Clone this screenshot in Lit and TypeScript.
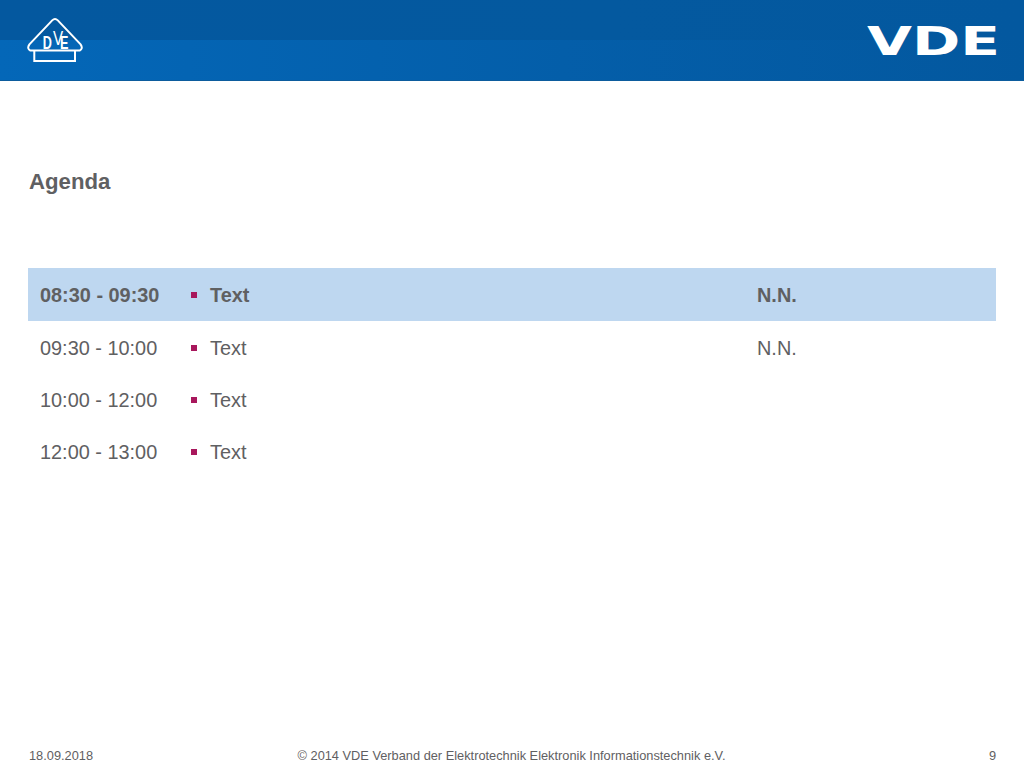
import { LitElement, html, css, svg } from "lit";
import { customElement } from "lit/decorators.js";

const rows = [
  { time: "08:30 - 09:30", text: "Text", who: "N.N.", active: true },
  { time: "09:30 - 10:00", text: "Text", who: "N.N.", active: false },
  { time: "10:00 - 12:00", text: "Text", who: "", active: false },
  { time: "12:00 - 13:00", text: "Text", who: "", active: false },
];

@customElement("app-root")
export class AppRoot extends LitElement {
  static styles = css`
    :host {
      display: flex;
      flex-direction: column;
      width: 1024px;
      height: 768px;
      background: #fff;
      color: #5f6062;
      font-family: "Liberation Sans", Arial, sans-serif;
      overflow: hidden;
    }
    .header {
      position: relative;
      height: 81px;
      flex: none;
      display: flex;
      align-items: flex-start;
      justify-content: space-between;
      padding: 0 24px 0 27px;
      box-sizing: border-box;
      background: linear-gradient(90deg, #0467b8 0%, #045ea9 55%, #03589f 100%);
      border-bottom: 1px solid #0c5c9d;
      overflow: hidden;
    }
    .band {
      position: absolute;
      left: 0;
      right: 0;
      top: 0;
      height: 40px;
      background: linear-gradient(90deg, #04589f 0%, #04599f 60%, #03589f 100%);
    }
    .mark, .vde { position: relative; display: block; }
    .mark { margin-top: 17px; }
    .vde { margin-top: 17px; }
    .title {
      margin: 89px 0 0 29px;
      height: 24px;
      font-size: 22.2px;
      line-height: 24px;
      font-weight: 700;
    }
    .table {
      margin: 74px 28px 0 28px;
      display: flex;
      flex-direction: column;
    }
    .row {
      display: grid;
      grid-template-columns: 160px 22px 547px 1fr;
      align-items: center;
      box-sizing: border-box;
      height: 52px;
      padding-top: 4px;
      font-size: 19.9px;
    }
    .row.active {
      height: 52.5px;
      padding-top: 3px;
      background: #bed7f0;
      font-weight: 700;
    }
    .time { padding-left: 12px; }
    .bullet { width: 6px; height: 6px; background: #a8175c; margin: -2px 0 0 3px; }
    .spacer { flex: 1; }
    .footer {
      display: grid;
      grid-template-columns: 1fr 700px 1fr;
      padding: 0 28px 4px 29px;
      font-size: 12.8px;
      line-height: 16px;
    }
    .center { text-align: center; transform: translateX(-1px); }
    .right { text-align: right; }
  `;

  render() {
    return html`
      <div class="header">
        <div class="band"></div>
        <svg class="mark" width="58" height="47" viewBox="0 0 58 47">
          <path d="M25.2 3.4 Q28 0.6 30.8 3.4 L53.6 27.4 Q56.4 31.6 52.6 33.6 L3.4 33.6 Q-0.4 31.6 2.4 27.4 Z" fill="none" stroke="#fff" stroke-width="2" stroke-linejoin="round" />
          <path d="M7.3 34 V44 H48 V34" fill="none" stroke="#fff" stroke-width="2" />
          ${svg`<g transform="scale(0.72 1)"><text font-family="Liberation Sans" font-weight="700" font-size="17.5" fill="#fff"><tspan x="22" y="32">D</tspan><tspan x="36" y="28" font-size="21" font-weight="400">V</tspan><tspan x="46" y="32">E</tspan></text></g>`}
        </svg>
        <svg class="vde" width="134" height="48" viewBox="0 0 134 48">
          ${svg`<text x="1" y="38" font-family="DejaVu Sans" font-size="38.5" font-weight="700" fill="#fff" textLength="133" lengthAdjust="spacingAndGlyphs">VDE</text>`}
        </svg>
      </div>
      <div class="title">Agenda</div>
      <div class="table">
        ${rows.map(
          (r) => html`
            <div class="row ${r.active ? "active" : ""}">
              <div class="time">${r.time}</div>
              <div class="bullet"></div>
              <div>${r.text}</div>
              <div>${r.who}</div>
            </div>
          `
        )}
      </div>
      <div class="spacer"></div>
      <div class="footer">
        <div>18.09.2018</div>
        <div class="center">© 2014 VDE Verband der Elektrotechnik Elektronik Informationstechnik e.V.</div>
        <div class="right">9</div>
      </div>
    `;
  }
}
